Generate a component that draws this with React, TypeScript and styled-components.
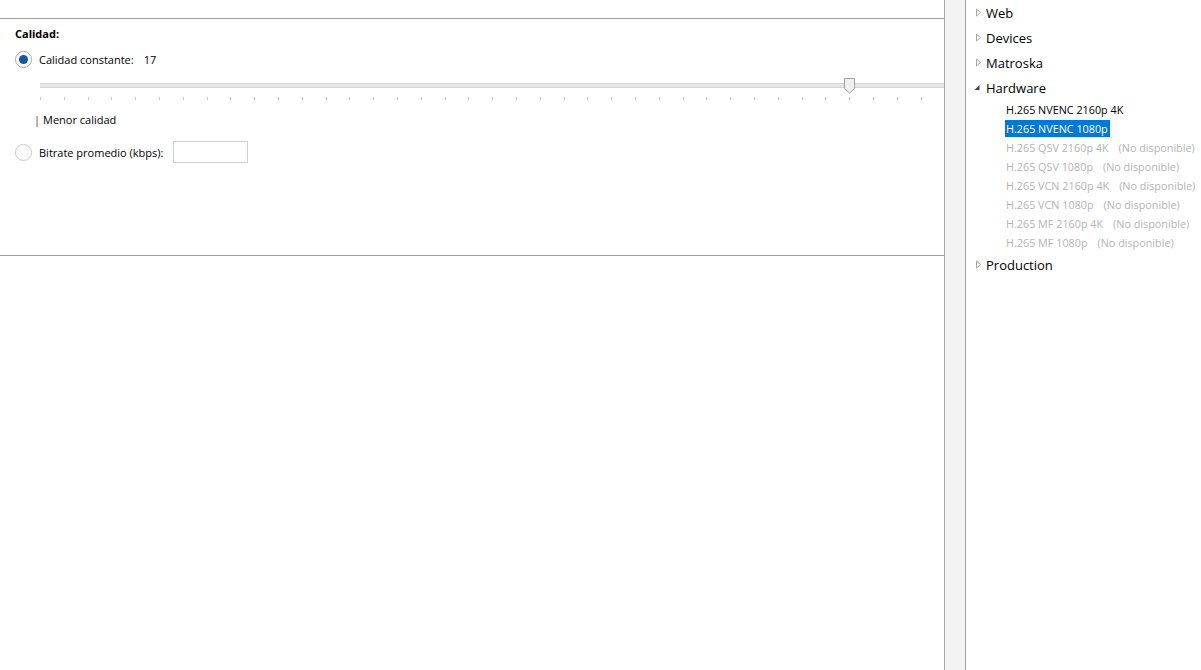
import React from "react"
import styled, { createGlobalStyle } from "styled-components"

const GlobalStyle = createGlobalStyle`
  html, body {
    margin: 0;
    padding: 0;
    background: #ffffff;
  }
  body {
    font-family: "Segoe UI", "Open Sans", "Noto Sans", sans-serif;
    color: #000000;
  }
`

const Window = styled.div`
  display: flex;
  width: 1201px;
  height: 670px;
  overflow: hidden;
  background: #ffffff;
`

const LeftPane = styled.div`
  display: flex;
  flex-direction: column;
  width: 944px;
  flex-shrink: 0;
`

const TopStrip = styled.div`
  height: 18px;
  border-bottom: 1px solid #a0a0a0;
`

const QualityGroup = styled.section`
  height: 237px;
  border-bottom: 1px solid #a0a0a0;
  padding: 7px 0 0 15px;
  box-sizing: border-box;
  font-size: 11px;
`

const GroupTitle = styled.div`
  font-weight: 700;
  line-height: 15px;
`

const OptionRow = styled.label`
  display: flex;
  align-items: center;
  height: 22px;
  margin-top: ${p => p.$top}px;
`

const Radio = styled.span`
  width: 15px;
  height: 15px;
  border-radius: 50%;
  border: 1px solid ${p => (p.$checked ? "#a8a8a8" : "#c8c8c8")};
  background: #ffffff;
  display: flex;
  align-items: center;
  justify-content: center;
  margin-right: 7px;
  flex-shrink: 0;

  &::after {
    content: "";
    display: ${p => (p.$checked ? "block" : "none")};
    width: 9px;
    height: 9px;
    border-radius: 50%;
    background: #0a5aa5;
  }
`

const Value = styled.span`
  margin-left: 10px;
`

const SliderArea = styled.div`
  position: relative;
  margin-left: 25px;
  height: 30px;
  overflow: hidden;
`

const Track = styled.div`
  margin-top: 13px;
  width: 1220px;
  height: 3px;
  background: #e6e6e6;
  border-top: 1px solid #d6d6d6;
  border-bottom: 1px solid #d6d6d6;
`

const Ticks = styled.div`
  margin-top: 9px;
  width: 1220px;
  height: 3px;
  background: repeating-linear-gradient(
    to right,
    #c8c8c8 0 1px,
    transparent 1px 23.8px
  );
`

const Thumb = styled.svg`
  position: absolute;
  top: 8px;
`

const ScaleLabel = styled.div`
  margin: 12px 0 0 19px;
  line-height: 15px;

  &::before {
    content: "|";
    color: #7a1426;
    margin-right: 3px;
  }
`

const NumberBox = styled.div`
  width: 73px;
  height: 20px;
  border: 1px solid #cfcfcf;
  margin-left: 10px;
`

const Splitter = styled.div`
  width: 20px;
  flex-shrink: 0;
  background: #f3f3f3;
  border-left: 1px solid #a8a8a8;
  border-right: 1px solid #a0a0a0;
`

const Tree = styled.ul`
  list-style: none;
  margin: 0;
  padding: 0;
  flex: 1;
  font-size: 13px;
`

const Node = styled.li`
  display: flex;
  align-items: center;
  height: 25px;
  padding-left: 8px;
`

const Arrow = styled.svg`
  width: 9px;
  height: 9px;
  margin-right: 3px;
  flex-shrink: 0;
`

const Children = styled.ul`
  list-style: none;
  margin: 0;
  padding: 0 0 0 39px;
  font-size: 10.8px;
`

const Leaf = styled.li`
  display: flex;
  align-items: center;
  height: 19px;
  color: ${p => (p.$disabled ? "#b4b4b4" : "#000000")};
  white-space: nowrap;
`

const LeafText = styled.span`
  padding: 1px 2px 1px 1px;
  background: ${p => (p.$selected ? "#0078d7" : "transparent")};
  color: ${p => (p.$selected ? "#ffffff" : "inherit")};
`

const Note = styled.span`
  margin-left: 8px;
`

const Collapsed = () => (
  <Arrow viewBox="0 0 9 9">
    <path d="M2.5 1 L6.5 4.5 L2.5 8 Z" fill="#ffffff" stroke="#a6a6a6" strokeWidth="1" />
  </Arrow>
)

const Expanded = () => (
  <Arrow viewBox="0 0 9 9">
    <path d="M5.5 2 L5.5 7 L0.5 7 Z" fill="#444444" />
  </Arrow>
)

const presets = [
  { name: "H.265 NVENC 2160p 4K" },
  { name: "H.265 NVENC 1080p", selected: true },
  { name: "H.265 QSV 2160p 4K", disabled: true },
  { name: "H.265 QSV 1080p", disabled: true },
  { name: "H.265 VCN 2160p 4K", disabled: true },
  { name: "H.265 VCN 1080p", disabled: true },
  { name: "H.265 MF 2160p 4K", disabled: true },
  { name: "H.265 MF 1080p", disabled: true },
]

const quality = 17
const thumbX = (51 - quality) * 23.8 - 5

export default function App() {
  return (
    <>
      <GlobalStyle />
      <Window>
        <LeftPane>
          <TopStrip />
          <QualityGroup>
            <GroupTitle>Calidad:</GroupTitle>
            <OptionRow $top={7}>
              <Radio $checked />
              Calidad constante:
              <Value>{quality}</Value>
            </OptionRow>
            <SliderArea>
              <Track />
              <Ticks />
              <Thumb width="11" height="16" viewBox="0 0 11 16" style={{ left: thumbX }}>
                <path d="M0.5 0.5 H10.5 V10.5 L5.5 15 L0.5 10.5 Z" fill="#f0f0f0" stroke="#a0a0a0" />
              </Thumb>
            </SliderArea>
            <ScaleLabel>Menor calidad</ScaleLabel>
            <OptionRow $top={14}>
              <Radio />
              Bitrate promedio (kbps):
              <NumberBox />
            </OptionRow>
          </QualityGroup>
        </LeftPane>
        <Splitter />
        <Tree>
          <Node><Collapsed />Web</Node>
          <Node><Collapsed />Devices</Node>
          <Node><Collapsed />Matroska</Node>
          <Node><Expanded />Hardware</Node>
          <Children>
            {presets.map(p => (
              <Leaf key={p.name} $disabled={p.disabled}>
                <LeafText $selected={p.selected}>{p.name}</LeafText>
                {p.disabled && <Note>(No disponible)</Note>}
              </Leaf>
            ))}
          </Children>
          <Node><Collapsed />Production</Node>
        </Tree>
      </Window>
    </>
  )
}
